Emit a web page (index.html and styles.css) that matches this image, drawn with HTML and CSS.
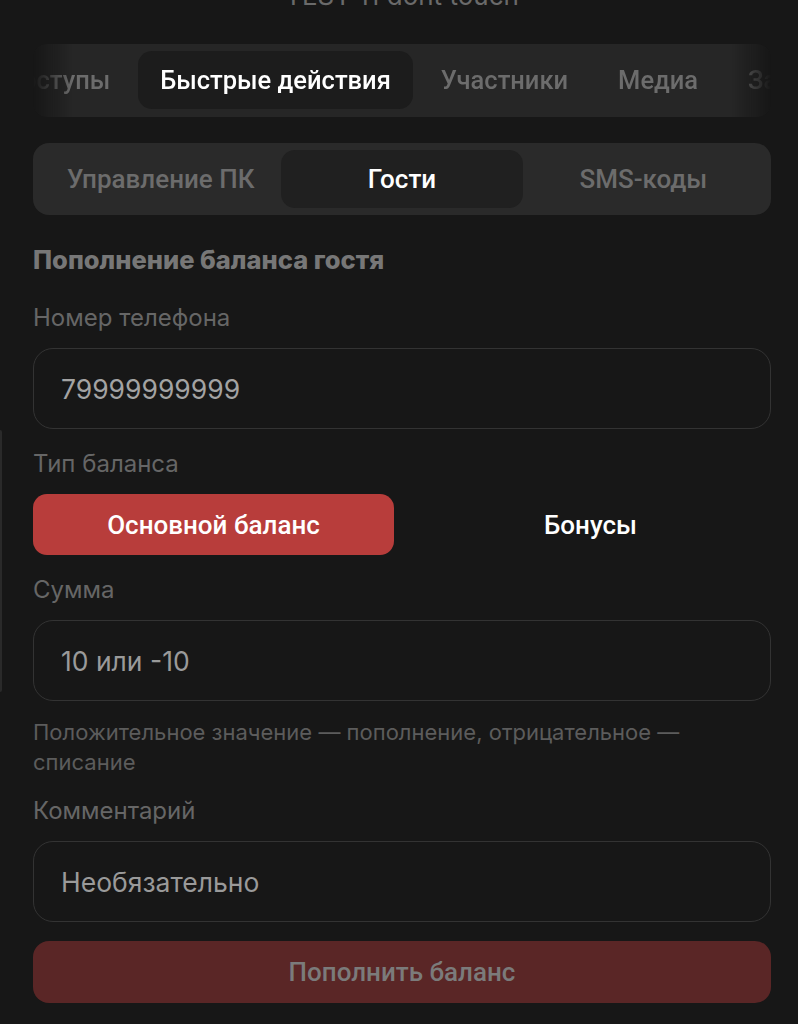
FILE: index.html
```html
<html>
  <head>
    <title>Гости</title>
    <meta name="viewport" content="width=device-width, initial-scale=1">
    <link rel="stylesheet" href="styles.css">
  </head>
  <body>
    <div class="edge-line"></div>
    <div class="page">
      <div class="club-title">TEST 11 dont touch</div>

      <!-- top section tabs, scrolled a bit -->
      <div class="tabs">
        <div class="tabs-row">
          <div class="tab">Доступы</div>
          <div class="tab active">Быстрые действия</div>
          <div class="tab">Участники</div>
          <div class="tab">Медиа</div>
          <div class="tab">Заметки</div>
        </div>
      </div>

      <div class="segment">
        <div class="seg">Управление ПК</div>
        <div class="seg active">Гости</div>
        <div class="seg">SMS-коды</div>
      </div>

      <h2 class="section-title">Пополнение баланса гостя</h2>

      <label class="field-label first">Номер телефона</label>
      <div class="input">79999999999</div>

      <label class="field-label">Тип баланса</label>
      <div class="switch">
        <div class="switch-btn active">Основной баланс</div>
        <div class="switch-btn">Бонусы</div>
      </div>

      <label class="field-label">Сумма</label>
      <div class="input placeholder">10 или -10</div>
      <p class="hint">Положительное значение — пополнение, отрицательное — списание</p>

      <label class="field-label">Комментарий</label>
      <div class="input placeholder">Необязательно</div>

      <button class="submit">Пополнить баланс</button>
    </div>
  </body>
</html>
```

FILE: styles.css
```css
body {
  margin: 0;
  background-color: #171717;
  font-family: Inter, "Noto Sans", sans-serif;
  overflow: hidden;
}
.edge-line {
  position: fixed;
  left: 0;
  top: 430px;
  width: 2px;
  height: 262px;
  background: #2a2a2a;
  border-radius: 0 2px 2px 0;
}
.page {
  padding: 0 27px 0 33px;
  display: flex;
  flex-direction: column;
}
.club-title {
  margin-top: -17px;
  height: 26px;
  text-align: center;
  color: #6a6a6a;
  font-size: 26px;
  line-height: 26px;
}

/* Tabs */
.tabs {
  margin-top: 35px;
  height: 73px;
  box-sizing: border-box;
  padding: 7px 0;
  background: #262626;
  border-radius: 14px;
  overflow: hidden;
  -webkit-mask-image: linear-gradient(to right, transparent 0, #000 40px, #000 calc(100% - 40px), transparent 100%);
  mask-image: linear-gradient(to right, transparent 0, #000 40px, #000 calc(100% - 40px), transparent 100%);
}
.tabs-row {
  display: flex;
  gap: 6px;
  margin-left: -52px;
  white-space: nowrap;
}
.tab {
  height: 58px;
  padding: 0 22px;
  display: flex;
  align-items: center;
  font-family: Roboto, sans-serif;
  font-size: 25.5px;
  font-weight: 500;
  color: #6c6c6c;
  border-radius: 14px;
}
.tab.active {
  background: #1c1c1c;
  color: #fff;
}

/* Segmented control */
.segment {
  margin-top: 26px;
  padding: 7px;
  background: #2a2a2a;
  border-radius: 16px;
  display: grid;
  grid-template-columns: 1fr 1fr 1fr;
}
.seg {
  height: 58px;
  display: flex;
  align-items: center;
  justify-content: center;
  font-family: Roboto, sans-serif;
  font-size: 26px;
  font-weight: 500;
  color: #6c6c6c;
  border-radius: 14px;
}
.seg.active {
  background: #202020;
  color: #fff;
}

.section-title {
  margin: 29px 0 0;
  font-size: 25.5px;
  line-height: 32px;
  font-weight: 800;
  color: #777;
}
.field-label {
  display: block;
  margin-top: 20px;
  font-size: 24px;
  line-height: 30px;
  color: #666;
}
.field-label.first {
  margin-top: 27px;
}
.input {
  margin-top: 15px;
  height: 81px;
  box-sizing: border-box;
  border: 1.5px solid #333;
  border-radius: 20px;
  padding: 0 27px;
  display: flex;
  align-items: center;
  font-size: 26.5px;
  color: #a3a3a3;
}
.input.placeholder {
  color: #9a9a9a;
}

.switch {
  margin-top: 15px;
  display: grid;
  grid-template-columns: 1fr 1fr;
  gap: 16px;
}
.switch-btn {
  height: 61px;
  display: flex;
  align-items: center;
  justify-content: center;
  font-family: Roboto, sans-serif;
  font-size: 26px;
  font-weight: 500;
  color: #fff;
  border-radius: 14px;
}
.switch-btn.active {
  background: #b83d3b;
}

.hint {
  margin: 16px 0 0;
  font-size: 22px;
  line-height: 30px;
  color: #5c5c5c;
}
.hint + .field-label {
  margin-top: 19px;
}

.submit {
  margin-top: 19px;
  height: 62px;
  border: 0;
  border-radius: 16px;
  background: #5a2626;
  color: #7b7b7b;
  font-family: Roboto, sans-serif;
  font-size: 26px;
  font-weight: 500;
}
```
